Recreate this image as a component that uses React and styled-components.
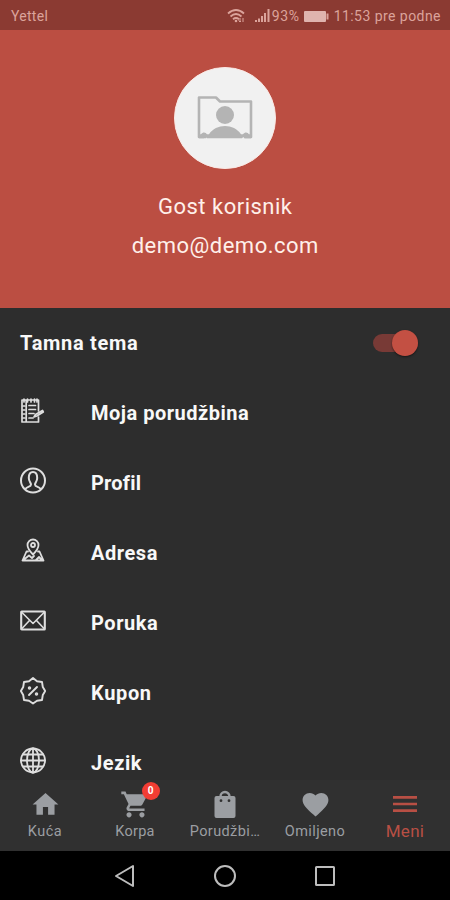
import React from 'react';
import styled, { createGlobalStyle } from 'styled-components';
import { MdHome, MdShoppingCart, MdFavorite, MdMenu } from 'react-icons/md';

const GlobalStyle = createGlobalStyle`
  * { box-sizing: border-box; }
  body { margin: 0; background: #000; font-family: Roboto, sans-serif; }
`;

const Screen = styled.main`
  width: 450px;
  height: 900px;
  display: flex;
  flex-direction: column;
  overflow: hidden;
  background: #2d2d2d;
`;

const StatusBar = styled.header`
  height: 30px;
  flex: none;
  display: flex;
  align-items: center;
  justify-content: space-between;
  padding: 2px 9px 0 11px;
  background: #8b3a32;
  color: #dba39b;
  font-size: 14px;
`;

const StatusText = styled.span`
  letter-spacing: ${({ $spacing }) => $spacing || 0}px;
  white-space: nowrap;
`;

const StatusGroup = styled.div`
  display: flex;
  align-items: center;
  gap: 3px;
  svg { display: block; flex: none; }
`;

const Reception = styled.div`
  display: flex;
  align-items: center;
  margin-left: 6px;
`;

const ProfileHeader = styled.section`
  height: 278px;
  flex: none;
  display: flex;
  flex-direction: column;
  align-items: center;
  padding-top: 37px;
  background: #bb4e42;
  color: #fff0ea;
`;

const Avatar = styled.div`
  width: 102px;
  height: 102px;
  border-radius: 50%;
  background: #f1f1f1;
  border: 1px solid #fbe9e5;
  display: grid;
  place-items: center;
  margin-bottom: 18px;
`;

const ProfileLine = styled.div`
  height: 39px;
  line-height: 39px;
  font-size: 22px;
  letter-spacing: ${({ $spacing }) => $spacing}px;
  margin-right: -${({ $spacing }) => $spacing}px;
`;

const MenuList = styled.section`
  height: 472px;
  flex: none;
  overflow: hidden;
`;

const MenuRow = styled.div`
  height: 70px;
  display: flex;
  align-items: center;
  padding-left: 20px;
  color: #f8f8f8;
`;

const ThemeRow = styled(MenuRow)`
  justify-content: space-between;
  padding-right: 32px;
`;

const RowIcon = styled.span`
  width: 71px;
  height: 30px;
  flex: none;
  margin-top: -2px;
  svg { display: block; }
`;

const RowLabel = styled.span`
  font-size: 20px;
  font-weight: 700;
  line-height: 28px;
  letter-spacing: ${({ $spacing }) => $spacing}px;
  white-space: nowrap;
`;

const Switch = styled.div`
  width: 45px;
  height: 18px;
  border-radius: 9px;
  background: #783a36;
  display: flex;
  align-items: center;
  justify-content: flex-end;
`;

const Knob = styled.span`
  width: 26px;
  height: 26px;
  flex: none;
  border-radius: 50%;
  background: #c35043;
  box-shadow: 0 1px 2px rgba(0, 0, 0, 0.5);
`;

const TabBar = styled.nav`
  height: 71px;
  flex: none;
  display: grid;
  grid-template-columns: repeat(5, 90px);
  background: #303030;
`;

const Tab = styled.div`
  display: flex;
  flex-direction: column;
  align-items: center;
  padding-top: ${({ $active }) => ($active ? 8 : 9)}px;
  color: ${({ $active }) => ($active ? '#b84f44' : '#9b9ea2')};
`;

const TabIcon = styled.span`
  position: relative;
  height: 32px;
  svg { display: block; }
`;

const TabLabel = styled.span`
  font-size: ${({ $active }) => ($active ? 17 : 14.5)}px;
  line-height: 22px;
  letter-spacing: ${({ $spacing }) => $spacing}px;
  white-space: nowrap;
`;

const Badge = styled.span`
  position: absolute;
  left: 22px;
  top: -7px;
  width: 18px;
  height: 18px;
  border-radius: 50%;
  background: #f23d33;
  color: #fff;
  font-size: 10px;
  font-weight: 700;
  line-height: 18px;
  text-align: center;
`;

const SystemNav = styled.footer`
  flex: 1;
  display: flex;
  align-items: center;
  justify-content: center;
  gap: 76px;
  background: #000;
  svg { display: block; }
`;

const LineIcon = ({ children, width = 1.7 }) => (
  <svg width="26" height="28" viewBox="0 0 26 28" fill="none" stroke="#dedede"
    strokeWidth={width} strokeLinejoin="round" strokeLinecap="round">
    {children}
  </svg>
);

const OrderIcon = () => (
  <LineIcon width={1.7}>
    <path d="M18.500 14V3H2v22h16.500v-5M6.200 3v22" />
    <path d="M4 2v3M7.500 2v3M11 2v3M14.500 2v3M17 2v3" />
    <path d="M3 9h2M3 13h2M3 17h2M3 21h2M9 8.500h6.500M9 12.500h6.500M9 16.500h5M9 21h4" />
    <path d="m14 20 1.500-2.500 7-4 .8 1.500-6.500 4z" />
  </LineIcon>
);

const ProfileIcon = () => (
  <LineIcon width={2}>
    <circle cx="13" cy="13.500" r="12" />
    <path d="M5.500 22c1-2.500 5.500-1.800 5.500-4.500 0-1.500-2.200-3-2.200-6.500 0-3.500 1.400-6 4.200-6s4.200 2.500 4.200 6c0 3.500-2.200 5-2.200 6.500 0 2.700 4.500 2 5.500 4.500" />
  </LineIcon>
);

const AddressIcon = () => (
  <LineIcon width={1.8}>
    <path d="M13 17.500C10 14.500 7.500 11.500 7.500 8a5.500 5.500 0 0 1 11 0C18.500 11.500 16 14.500 13 17.500z" />
    <circle cx="13" cy="8" r="2" />
    <path d="M8 14.500H6.500L2.500 23.500h21L19.500 14.500H18M4 22.500l5-4 3 2.500 2-2M16 23l3-3 3 3" />
  </LineIcon>
);

const MessageIcon = () => (
  <LineIcon width={2.1}>
    <rect x="1.200" y="4.500" width="23.600" height="18" rx="0.5" />
    <path d="m2 5.500 11 11 11-11M2 21.500l7.500-8M24 21.500l-7.500-8" strokeWidth="1.600" />
  </LineIcon>
);

const CouponIcon = () => (
  <LineIcon width={1.9}>
    <path d="M13 1 17 4.200 22 5 22.800 10 25.200 14 22.800 18 22 23 17 23.800 13 26.500 9 23.800 4 23 3.200 18 .9 14 3.200 10 4 5 9 4.200Z" />
    <path d="m9 18 8-8" />
    <circle cx="9.500" cy="11" r="0.800" />
    <circle cx="16.500" cy="17" r="0.800" />
  </LineIcon>
);

const GlobeIcon = () => (
  <LineIcon width={1.8}>
    <circle cx="13" cy="13.500" r="12" />
    <ellipse cx="13" cy="13.500" rx="6" ry="12" />
    <path d="M13 1.500v24M1 13.500h24M3 7.500h20M3 19.500h20" />
  </LineIcon>
);

const BagIcon = () => (
  <svg width="32" height="31" viewBox="0 0 32 31">
    <path d="M11.500 9V7.500a4.500 4.500 0 0 1 9 0V9" fill="none" stroke="currentColor" strokeWidth="2.400" />
    <path fillRule="evenodd" fill="currentColor"
      d="M7.500 7h17q2 0 2 2v18q0 2-2 2h-17q-2 0-2-2V9q0-2 2-2zM12 10.300a1.400 1.400 0 1 0 0 2.800 1.400 1.400 0 0 0 0-2.800zM20 10.300a1.400 1.400 0 1 0 0 2.800 1.400 1.400 0 0 0 0-2.800z" />
  </svg>
);

const AvatarIcon = () => (
  <svg width="58" height="46" viewBox="0 0 58 46">
    <path d="M10 42H3V2.500h17l4 4h31V42h-7" fill="none" stroke="#b4b4b4" strokeWidth="2.600" strokeLinejoin="round" />
    <path d="M3 43.300v-4h2c2-3 5-2 6 0h2c7-11 25-11 32 0h2c2-3 5-2 6 0h2v4h-6q-1.500-2-3 0H11q-2-2-3 0z" fill="#b4b4b4" />
    <circle cx="29" cy="20" r="9" fill="#b4b4b4" />
  </svg>
);

const WifiIcon = () => (
  <svg width="18" height="16" viewBox="0 0 18 16" fill="none" stroke="#dba39b" strokeWidth="1.800">
    <path d="M1 5.500q8-7 16 0M3.500 8.500q5.500-5 11 0M6 11.200q3-2.500 6 0" />
    <circle cx="9" cy="13" r="1.300" fill="#dba39b" stroke="none" />
    <path d="M13 10v4m-1.500-1.500L13 14l1-1M16 14v-4" strokeWidth="1" />
  </svg>
);

const SignalIcon = () => (
  <svg width="18" height="14" viewBox="0 0 18 14" fill="#dba39b">
    <path d="M1 11h2v2H1zM4 9.500h2V13H4zM7 7h2v6H7zM10 4h2v9h-2zM13.500 0h2v13h-2z" />
  </svg>
);

const BatteryIcon = () => (
  <svg width="28" height="13" viewBox="0 0 28 13">
    <rect x="1" y="1" width="22" height="11" rx="1" fill="#dfb4ae" />
    <path d="M24.500 3.500v6" stroke="#dba39b" strokeWidth="2" />
  </svg>
);

const menuItems = [
  { label: 'Moja porudžbina', Icon: OrderIcon, spacing: 0.5 },
  { label: 'Profil', Icon: ProfileIcon, spacing: 0.2 },
  { label: 'Adresa', Icon: AddressIcon, spacing: 0.55 },
  { label: 'Poruka', Icon: MessageIcon, spacing: 0.55 },
  { label: 'Kupon', Icon: CouponIcon, spacing: 0.65 },
  { label: 'Jezik', Icon: GlobeIcon, spacing: 0.6 },
];

const tabs = [
  { label: 'Kuća', Icon: MdHome, spacing: 0.5 },
  { label: 'Korpa', Icon: MdShoppingCart, badge: '0', spacing: 0.3 },
  { label: 'Porudžbi…', Icon: BagIcon, spacing: 0.4 },
  { label: 'Omiljeno', Icon: MdFavorite, spacing: 0.4 },
  { label: 'Meni', Icon: MdMenu, active: true, spacing: 0.3 },
];

export default function App() {
  return (
    <Screen>
      <GlobalStyle />
      <StatusBar>
        <StatusText $spacing={0.3}>Yettel</StatusText>
        <StatusGroup>
          <WifiIcon />
          <Reception>
            <SignalIcon />
            <StatusText $spacing={0.6}>93%</StatusText>
          </Reception>
          <BatteryIcon />
          <StatusText $spacing={0.45}>11:53 pre podne</StatusText>
        </StatusGroup>
      </StatusBar>
      <ProfileHeader>
        <Avatar><AvatarIcon /></Avatar>
        <ProfileLine $spacing={0.5}>Gost korisnik</ProfileLine>
        <ProfileLine $spacing={0.5}>demo@demo.com</ProfileLine>
      </ProfileHeader>
      <MenuList>
        <ThemeRow>
          <RowLabel $spacing={0.7}>Tamna tema</RowLabel>
          <Switch><Knob /></Switch>
        </ThemeRow>
        {menuItems.map(({ label, Icon, spacing }) => (
          <MenuRow key={label}>
            <RowIcon><Icon /></RowIcon>
            <RowLabel $spacing={spacing}>{label}</RowLabel>
          </MenuRow>
        ))}
      </MenuList>
      <TabBar>
        {tabs.map(({ label, Icon, badge, active, spacing }) => (
          <Tab key={label} $active={active}>
            <TabIcon>
              <Icon size={active ? 32 : 31} />
              {badge && <Badge>{badge}</Badge>}
            </TabIcon>
            <TabLabel $active={active} $spacing={spacing}>{label}</TabLabel>
          </Tab>
        ))}
      </TabBar>
      <SystemNav>
        <svg width="24" height="24" viewBox="0 0 24 24" fill="none" stroke="#bdbdbd" strokeWidth="2" strokeLinejoin="round">
          <path d="M20 2v20L3 12z" />
        </svg>
        <svg width="24" height="24" viewBox="0 0 24 24" fill="none" stroke="#bdbdbd" strokeWidth="2">
          <circle cx="12" cy="12" r="10" />
        </svg>
        <svg width="24" height="24" viewBox="0 0 24 24" fill="none" stroke="#bdbdbd" strokeWidth="2">
          <rect x="3" y="3" width="18" height="18" rx="0.5" />
        </svg>
      </SystemNav>
    </Screen>
  );
}
